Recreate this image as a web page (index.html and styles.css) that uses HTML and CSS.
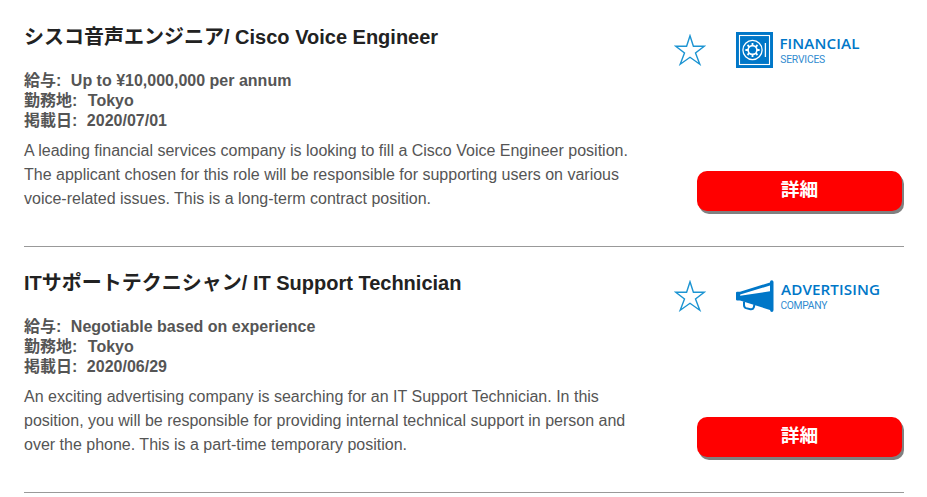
FILE: index.html
```html
<!DOCTYPE html>
<html lang="ja">
<head>
  <meta charset="UTF-8">
  <meta name="viewport" content="width=device-width, initial-scale=1.0">
  <title>求人情報</title>
  <link rel="stylesheet" href="styles.css">
</head>
<body>
  <main class="job-list">
    <article class="job">
      <div class="job-info">
        <h2>シスコ音声エンジニア/ Cisco Voice Engineer</h2>
        <ul class="job-meta">
          <li>給与:<span class="salary">Up to ¥10,000,000 per annum</span></li>
          <li>勤務地:<span class="place">Tokyo</span></li>
          <li>掲載日:<span class="date">2020/07/01</span></li>
        </ul>
        <p>A leading financial services company is looking to fill a Cisco Voice Engineer position. The applicant chosen for this role will be responsible for supporting users on various voice-related issues. This is a long-term contract position.</p>
      </div>
      <div class="job-side">
        <div class="job-icons">
          <svg class="star" viewBox="0 0 32 32">
            <path d="M16 1.8L19.4 12.3H30.2L21.5 18.9L25.8 30.2L16 23.3L6.2 30.2L10.5 18.9L1.8 12.3H12.6Z"/>
          </svg>
          <svg class="logo" viewBox="0 0 150 38">
            <rect class="fill" x="0" y="0" width="37" height="36"/>
            <rect class="line" x="3.5" y="3.5" width="30" height="29" stroke-width="1.1"/>
            <circle class="line" cx="16.5" cy="18" r="9.6" stroke-width="1.3"/>
            <circle class="line" cx="16.5" cy="18" r="4.4" stroke-width="1.6"/>
            <path class="line" stroke-width="1.8" d="M16.5 13.5v-2.6M16.5 22.5v2.6M12 18H9.4M21 18h2.6M13.3 14.8l-1.8-1.8M19.7 14.8l1.8-1.8M13.3 21.2l-1.8 1.8M19.7 21.2l1.8 1.8"/>
            <path class="line" stroke-width="1.3" d="M29.4 11v14"/>
            <text class="logo-name" x="43.4" y="17.3" textLength="80">FINANCIAL</text>
            <text class="logo-sub" x="44.2" y="30.5" textLength="45">SERVICES</text>
          </svg>
        </div>
        <a class="detail-btn" href="#">詳細</a>
      </div>
    </article>

    <article class="job">
      <div class="job-info">
        <h2>ITサポートテクニシャン/ IT Support Technician</h2>
        <ul class="job-meta">
          <li>給与:<span class="salary">Negotiable based on experience</span></li>
          <li>勤務地:<span class="place">Tokyo</span></li>
          <li>掲載日:<span class="date">2020/06/29</span></li>
        </ul>
        <p>An exciting advertising company is searching for an IT Support Technician. In this position, you will be responsible for providing internal technical support in person and over the phone. This is a part-time temporary position.</p>
      </div>
      <div class="job-side">
        <div class="job-icons">
          <svg class="star" viewBox="0 0 32 32">
            <path d="M16 1.8L19.4 12.3H30.2L21.5 18.9L25.8 30.2L16 23.3L6.2 30.2L10.5 18.9L1.8 12.3H12.6Z"/>
          </svg>
          <svg class="logo" viewBox="0 0 150 38">
            <path class="fill" fill-rule="evenodd" d="M0 14.8Q0 13.8 1.2 13.8H4L34 4.4V4Q34 2.2 35.8 2.2Q37.5 2.2 37.5 4V32Q37.5 34 35.8 34Q34.3 34 34 32L4 22.4H1.2Q0 22.4 0 21.4ZM4.2 16.4V17.8L34 13.2V7.6Z"/>
            <path class="horn" d="M8 23.5V27Q8 29.4 10 30.1L14.4 31.2Q17 31.6 17.8 29.4L18.4 26.5"/>
            <text class="logo-name" x="45" y="17.3" textLength="99">ADVERTISING</text>
            <text class="logo-sub" x="44.4" y="30.5" textLength="47">COMPANY</text>
          </svg>
        </div>
        <a class="detail-btn" href="#">詳細</a>
      </div>
    </article>
  </main>
</body>
</html>
```

FILE: styles.css
```css
* {
  margin: 0;
  padding: 0;
  box-sizing: border-box;
}

body {
  background-color: #fff;
  color: #555;
  font-family: "Liberation Sans", "Noto Sans CJK JP", sans-serif;
  font-size: 16px;
}

.job-list {
  width: 880px;
  margin: 0 0 0 24px;
  padding-top: 1px;
}

.job {
  display: flex;
  justify-content: space-between;
  height: 246px;
  border-bottom: 1px solid #999;
}

.job-info {
  width: 620px;
  padding-top: 21px;
}

.job-info h2 {
  font-size: 20px;
  line-height: 30px;
  color: #222;
  white-space: nowrap;
}

.job-meta {
  margin-top: 19px;
  list-style: none;
  font-weight: bold;
}

.job-meta li {
  height: 20px;
  line-height: 20px;
}

.salary {
  margin-left: 9.5px;
}

.place {
  margin-left: 10.5px;
}

.date {
  margin-left: 9.5px;
}

.job-info p {
  margin-top: 8px;
  line-height: 24px;
}

.job-side {
  width: 230px;
  display: flex;
  flex-direction: column;
}

.job-icons {
  display: flex;
  height: 170px;
  padding-top: 31px;
}

.star {
  width: 32px;
  height: 32px;
  margin-top: 2px;
  flex: none;
}

.star path {
  fill: none;
  stroke: #1c94d2;
  stroke-width: 1.4;
}

.logo {
  width: 150px;
  height: 38px;
  margin-left: 30px;
  flex: none;
}

.fill {
  fill: #0077c8;
}

.line {
  fill: none;
  stroke: #fff;
}

.horn {
  fill: none;
  stroke: #0077c8;
  stroke-width: 2;
}

.logo-name {
  font: 600 15.2px "Open Sans", sans-serif;
  fill: #0077c8;
}

.logo-sub {
  font: 10.3px Roboto, sans-serif;
  fill: #2f8bd0;
}

.detail-btn {
  width: 205px;
  height: 40px;
  margin-left: 23px;
  border-radius: 10px;
  background-color: #f00;
  box-shadow: 2px 3px 0 #808080;
  color: #fff;
  font-size: 18.7px;
  font-weight: bold;
  line-height: 37px;
  text-align: center;
  text-decoration: none;
}
```
